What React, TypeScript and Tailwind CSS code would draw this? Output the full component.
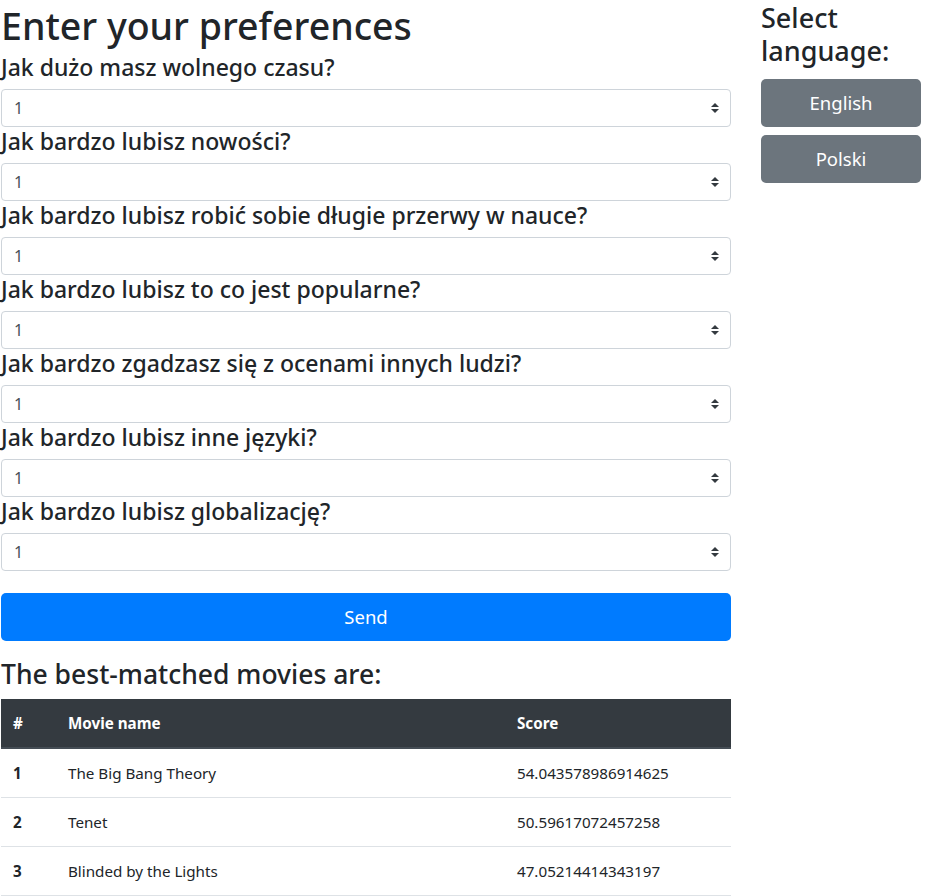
import { useState } from "react";

const questions = [
  "Jak dużo masz wolnego czasu?",
  "Jak bardzo lubisz nowości?",
  "Jak bardzo lubisz robić sobie długie przerwy w nauce?",
  "Jak bardzo lubisz to co jest popularne?",
  "Jak bardzo zgadzasz się z ocenami innych ludzi?",
  "Jak bardzo lubisz inne języki?",
  "Jak bardzo lubisz globalizację?",
];

const movies = [
  { id: 1, name: "The Big Bang Theory", score: "54.043578986914625" },
  { id: 2, name: "Tenet", score: "50.59617072457258" },
  { id: 3, name: "Blinded by the Lights", score: "47.05214414343197" },
];

function Select({ value, onChange }: { value: string; onChange: (v: string) => void }) {
  return (
    <div className="relative h-[38px]">
      <select
        value={value}
        onChange={(e) => onChange(e.target.value)}
        className="h-[38px] w-full appearance-none rounded-[4px] border border-[#ced4da] bg-white pl-[12px] pr-[28px] text-[16px] text-[#495057] outline-none"
      >
        {[1, 2, 3, 4, 5].map((n) => (
          <option key={n} value={n}>
            {n}
          </option>
        ))}
      </select>
      <svg
        className="pointer-events-none absolute right-[12px] top-[14px]"
        width="8"
        height="10"
        viewBox="0 0 4 5"
      >
        <path fill="#343a40" d="M2 0L0 2h4zm0 5L0 3h4z" />
      </svg>
    </div>
  );
}

export default function App() {
  const [answers, setAnswers] = useState(questions.map(() => "1"));

  return (
    <div className="flex gap-[30px] bg-white pl-[1px] text-[#212529] font-['Noto_Sans',sans-serif]">
      <div className="w-[730px]">
        <h1 className="mb-[5px] pt-[3px] text-[37.5px] font-medium leading-[45px]">Enter your preferences</h1>
        {questions.map((q, i) => (
          <div key={q}>
            <h4 className="mb-[8px] text-[23px] font-medium leading-[28px]">{q}</h4>
            <Select
              value={answers[i]}
              onChange={(v) => setAnswers(answers.map((a, j) => (j === i ? v : a)))}
            />
          </div>
        ))}
        <button className="mt-[22px] h-[48px] w-full rounded-[5px] bg-[#007bff] text-[18.5px] text-white">
          Send
        </button>
        <h3 className="mb-[8px] mt-[16px] text-[26.5px] font-medium leading-[34px]">
          The best-matched movies are:
        </h3>
        <table className="w-full border-collapse text-[15.2px]">
          <thead>
            <tr className="bg-[#343a40] text-white">
              <th className="w-[55px] border-b-2 border-[#454d55] p-[12px] text-left font-bold leading-[24px]">#</th>
              <th className="w-[449px] border-b-2 border-[#454d55] p-[12px] text-left font-bold leading-[24px]">Movie name</th>
              <th className="border-b-2 border-[#454d55] p-[12px] text-left font-bold leading-[24px]">Score</th>
            </tr>
          </thead>
          <tbody>
            {movies.map((m) => (
              <tr key={m.id} className="border-b border-[#dee2e6]">
                <th className="p-[12px] text-left font-bold leading-[24px]">{m.id}</th>
                <td className="p-[12px] leading-[24px]">{m.name}</td>
                <td className="p-[12px] leading-[24px]">{m.score}</td>
              </tr>
            ))}
          </tbody>
        </table>
      </div>
      <div className="w-[160px]">
        <h3 className="mb-[12px] pt-[2px] text-[27px] font-medium leading-[32.6px]">Select language:</h3>
        <div className="flex flex-col gap-[8px]">
          <button className="h-[48px] rounded-[5px] bg-[#6c757d] text-[18.5px] text-white">English</button>
          <button className="h-[48px] rounded-[5px] bg-[#6c757d] text-[18.5px] text-white">Polski</button>
        </div>
      </div>
    </div>
  );
}
